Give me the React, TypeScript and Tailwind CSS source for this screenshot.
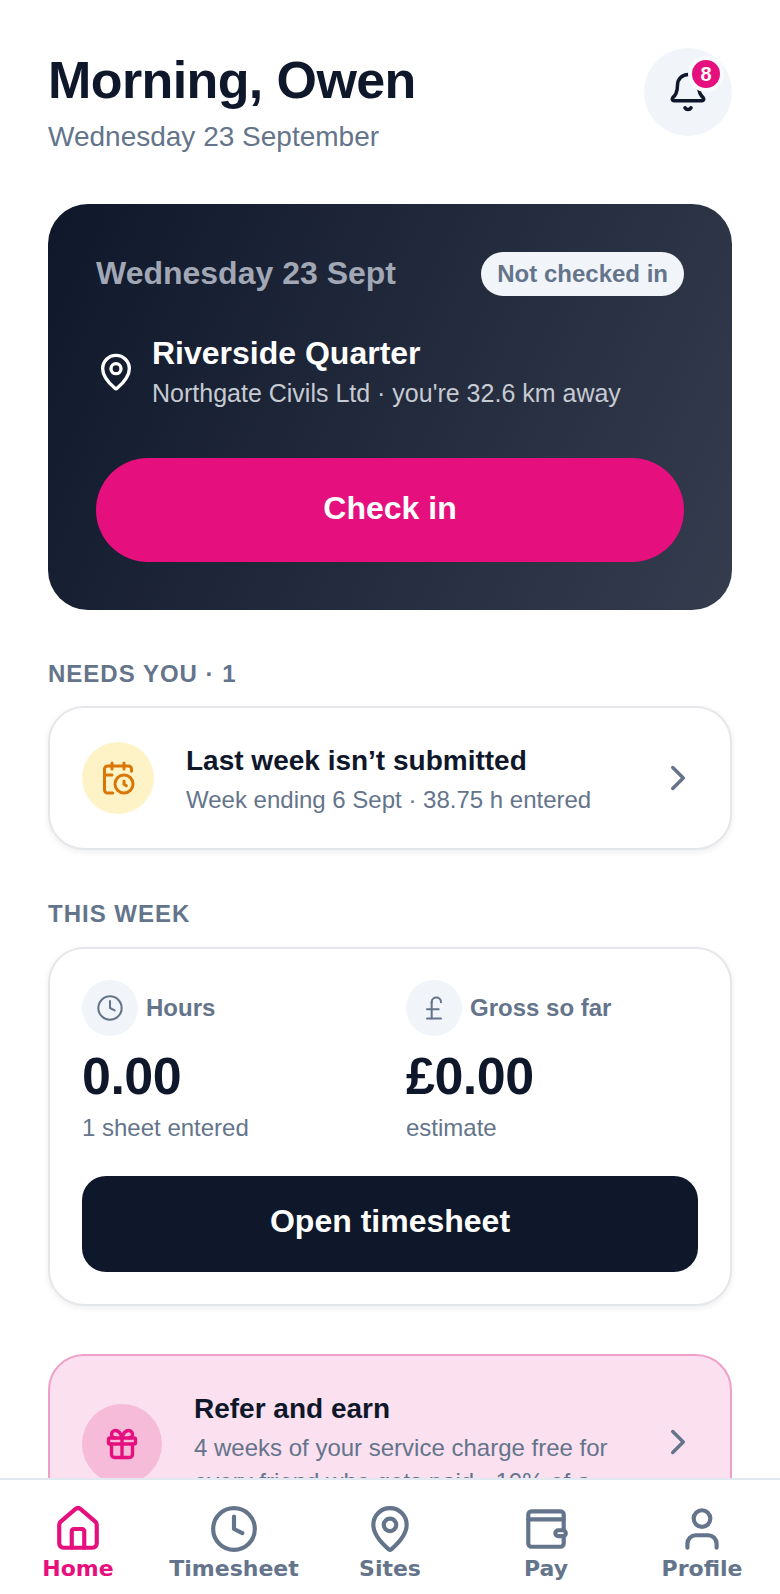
import React from "react";
import { Bell, MapPin, CalendarClock, ChevronRight, Clock, PoundSterling, Gift, House, User } from "lucide-react";

function WalletIcon({ className }: { className?: string }) {
  return (
    <svg viewBox="0 0 24 24" fill="none" stroke="currentColor" strokeWidth={2} strokeLinecap="round" strokeLinejoin="round" className={className}>
      <rect x="3.5" y="3.5" width="17" height="17" rx="1.5" />
      <path d="M3.5 7.4h17" />
      <rect x="16.5" y="12.6" width="5" height="2.8" rx="1.4" fill="#ffffff" />
    </svg>
  );
}

function NavItem({ icon, label, active }: { icon: React.ReactNode; label: string; active?: boolean }) {
  return (
    <div className={`flex flex-col items-center ${active ? "text-[#e60f7e]" : "text-[#64748b]"}`}>
      {icon}
      <span className="mt-[1px] font-['DejaVu_Sans',sans-serif] text-[22px] font-bold leading-[28px]">{label}</span>
    </div>
  );
}

export default function App() {
  return (
    <div className="flex h-[1594px] w-[780px] flex-col overflow-hidden bg-white font-['Liberation_Sans',Arial,sans-serif]">
      <main className="min-h-0 flex-1 overflow-hidden px-12 pt-12">
        <header className="flex items-start justify-between">
          <div>
            <h1 className="text-[52px] font-bold leading-[64px] tracking-[-0.6px] text-[#0f172a]">Morning, Owen</h1>
            <p className="mt-[9px] text-[28px] leading-[32px] text-[#64748b]">Wednesday 23 September</p>
          </div>
          <div className="relative flex h-[88px] w-[88px] items-center justify-center rounded-full bg-[#f1f5f9]">
            <Bell className="h-[42px] w-[42px] text-[#0f172a]" strokeWidth={2} />
            <span className="absolute left-[44px] top-[8px] flex h-[36px] w-[36px] items-center justify-center rounded-full border-4 border-[#f8fafc] bg-[#e60f7e] text-[20px] font-bold text-white">8</span>
          </div>
        </header>

        <section className="mt-[51px] rounded-[40px] bg-[linear-gradient(115deg,#0f172a,#343c4e)] px-12 pb-[48px] pt-12">
          <div className="flex items-center justify-between">
            <span className="mb-[2px] text-[32px] font-bold leading-[42px] text-[#a1a7b4]">Wednesday 23 Sept</span>
            <span className="flex h-[44px] items-center rounded-full bg-[#f1f5f9] px-[16px] text-[24px] font-bold text-[#64748b]">Not checked in</span>
          </div>
          <div className="mt-[37px] flex items-center gap-[16px]">
            <MapPin className="h-[40px] w-[40px] shrink-0 text-white" strokeWidth={2} />
            <div>
              <div className="text-[32px] font-bold leading-[40px] text-white">Riverside Quarter</div>
              <div className="mt-[2px] text-[25px] leading-[36px] text-[#c6cad2]">Northgate Civils Ltd · you're 32.6 km away</div>
            </div>
          </div>
          <div className="mt-[47px] flex h-[104px] items-center justify-center rounded-full bg-[#e60f7e] pb-[5px] text-[32px] font-bold text-white">Check in</div>
        </section>

        <h2 className="mt-[48px] text-[24px] font-bold leading-[32px] tracking-[1px] text-[#64748b]">NEEDS YOU · 1</h2>
        <section className="mt-[16px] flex h-[144px] items-center rounded-[36px] border-2 border-[#e5e7eb] bg-white px-[32px] shadow-[0_2px_6px_rgba(15,23,42,0.08)]">
          <div className="flex h-[72px] w-[72px] shrink-0 items-center justify-center rounded-full bg-[#fef3c7]">
            <CalendarClock className="h-[36px] w-[36px] text-[#d97706]" strokeWidth={2} />
          </div>
          <div className="ml-[32px] flex-1 pt-[3px]">
            <div className="text-[28px] font-bold leading-[36px] text-[#0f172a]">Last week isn’t submitted</div>
            <div className="mt-[4px] text-[24px] leading-[34px] text-[#64748b]">Week ending 6 Sept · 38.75 h entered</div>
          </div>
          <ChevronRight className="-mr-[1px] h-[42px] w-[42px] text-[#64748b]" strokeWidth={2} />
        </section>

        <h2 className="mt-[48px] text-[24px] font-bold leading-[32px] tracking-[1px] text-[#64748b]">THIS WEEK</h2>
        <section className="mt-[17px] rounded-[36px] border-2 border-[#e5e7eb] bg-white px-[32px] pb-[32px] pt-[31px] shadow-[0_2px_6px_rgba(15,23,42,0.08)]">
          <div className="grid grid-cols-2 gap-[32px]">
            <div>
              <div className="flex items-center gap-[8px]">
                <div className="flex h-[56px] w-[56px] items-center justify-center rounded-full bg-[#f1f5f9]">
                  <Clock className="h-[28px] w-[28px] text-[#64748b]" strokeWidth={1.75} />
                </div>
                <span className="text-[24px] font-bold text-[#64748b]">Hours</span>
              </div>
              <div className="mt-[8px] text-[52px] font-bold leading-[64px] tracking-[-0.5px] text-[#0f172a]">0.00</div>
              <div className="mt-[2px] text-[24px] leading-[36px] text-[#64748b]">1 sheet entered</div>
            </div>
            <div>
              <div className="flex items-center gap-[8px]">
                <div className="flex h-[56px] w-[56px] items-center justify-center rounded-full bg-[#f1f5f9]">
                  <PoundSterling className="h-[28px] w-[28px] text-[#64748b]" strokeWidth={1.75} />
                </div>
                <span className="text-[24px] font-bold text-[#64748b]">Gross so far</span>
              </div>
              <div className="mt-[8px] text-[52px] font-bold leading-[64px] tracking-[-0.5px] text-[#0f172a]">£0.00</div>
              <div className="mt-[2px] text-[24px] leading-[36px] text-[#64748b]">estimate</div>
            </div>
          </div>
          <div className="mt-[30px] flex h-[96px] items-center justify-center rounded-[24px] bg-[#0f172a] pb-[7px] text-[32px] font-bold text-white">Open timesheet</div>
        </section>

        <section className="mt-[48px] flex items-center rounded-[36px] border-2 border-[#f0a0c8] bg-[#fbe0ef] p-[32px]">
          <div className="flex h-[80px] w-[80px] shrink-0 items-center justify-center rounded-full bg-[#f6bbd9]">
            <Gift className="h-[36px] w-[36px] text-[#e60f7e]" strokeWidth={2.25} />
          </div>
          <div className="ml-[32px] flex-1 pt-[3px]">
            <div className="text-[28px] font-bold leading-[36px] text-[#0f172a]">Refer and earn</div>
            <div className="mt-[4px] text-[24px] leading-[34px] text-[#64748b]">4 weeks of your service charge free for every friend who gets paid · 10% of a</div>
          </div>
          <ChevronRight className="-mr-[1px] mb-[4px] h-[42px] w-[42px] shrink-0 text-[#64748b]" strokeWidth={2} />
        </section>
      </main>

      <nav className="grid h-[116px] shrink-0 grid-cols-5 border-t-2 border-[#e2e8f0] bg-white pt-[24px]">
        <NavItem active label="Home" icon={<House className="h-[50px] w-[50px]" strokeWidth={2} />} />
        <NavItem label="Timesheet" icon={<Clock className="h-[50px] w-[50px]" strokeWidth={2} />} />
        <NavItem label="Sites" icon={<MapPin className="h-[50px] w-[50px]" strokeWidth={2} />} />
        <NavItem label="Pay" icon={<WalletIcon className="h-[50px] w-[50px]" />} />
        <NavItem label="Profile" icon={<User className="h-[50px] w-[50px]" strokeWidth={2} />} />
      </nav>
    </div>
  );
}
